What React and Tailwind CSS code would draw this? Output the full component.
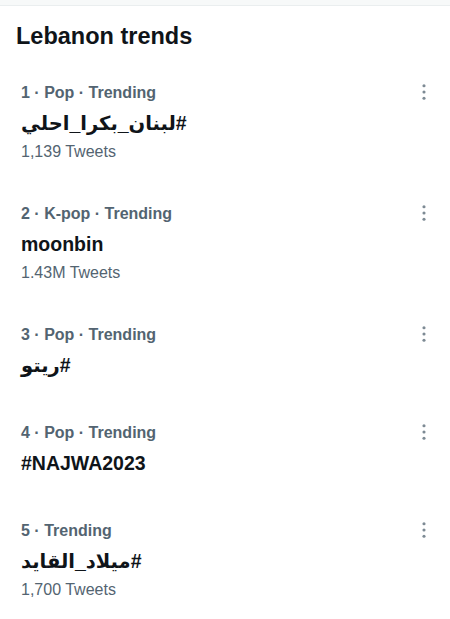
import React from 'react';

const trends = [
    { rank: 1, category: 'Pop', name: '#لبنان_بكرا_احلي', tweets: '1,139 Tweets' },
    { rank: 2, category: 'K-pop', name: 'moonbin', tweets: '1.43M Tweets' },
    { rank: 3, category: 'Pop', name: '#ريتو' },
    { rank: 4, category: 'Pop', name: '#NAJWA2023' },
    { rank: 5, name: '#ميلاد_القايد', tweets: '1,700 Tweets' },
];

const MoreIcon = () => (
    <svg viewBox="0 0 24 24" className="w-[22px] h-[22px] fill-[#7d8a94]">
        <circle cx="12" cy="5.2" r="1.7" />
        <circle cx="12" cy="12" r="1.7" />
        <circle cx="12" cy="18.8" r="1.7" />
    </svg>
);

const TrendRow = ({ trend }) => {
    return (
        <div className={`flex justify-between items-start pl-[21px] pr-[15px] pt-[21px] ${trend.tweets ? 'pb-[21px]' : 'pb-[24px]'}`}>
            <div className="flex flex-col">
                <div className="h-[20px] leading-[20px] text-[16px] font-bold text-[#536471]">
                    {trend.rank} · {trend.category ? `${trend.category} · ` : ''}Trending
                </div>
                <div dir="auto" className="mt-[7px] h-[26px] leading-[26px] text-[19.5px] font-bold text-[#0f1419] text-left">
                    {trend.name}
                </div>
                {trend.tweets && (
                    <div className="mt-[6px] h-[20px] leading-[20px] text-[16px] text-[#536471]">
                        {trend.tweets}
                    </div>
                )}
            </div>
            <div className="-mt-[2px]">
                <MoreIcon />
            </div>
        </div>
    );
};

const App = () => {
    return (
        <div
            className="w-[450px] h-[619px] bg-white overflow-hidden"
            style={{ fontFamily: '"Liberation Sans", "DejaVu Sans", sans-serif' }}
        >
            <div className="h-[6px] bg-[#f7f9f9] border-b border-[#eaeeef]" />
            <div className="pl-[16px] pt-[16px] pb-[12px]">
                <h2 className="text-[23.5px] leading-[28px] font-bold text-[#0f1419]">Lebanon trends</h2>
            </div>
            {trends.map(trend => (
                <TrendRow key={trend.rank} trend={trend} />
            ))}
        </div>
    );
};

export default App;
